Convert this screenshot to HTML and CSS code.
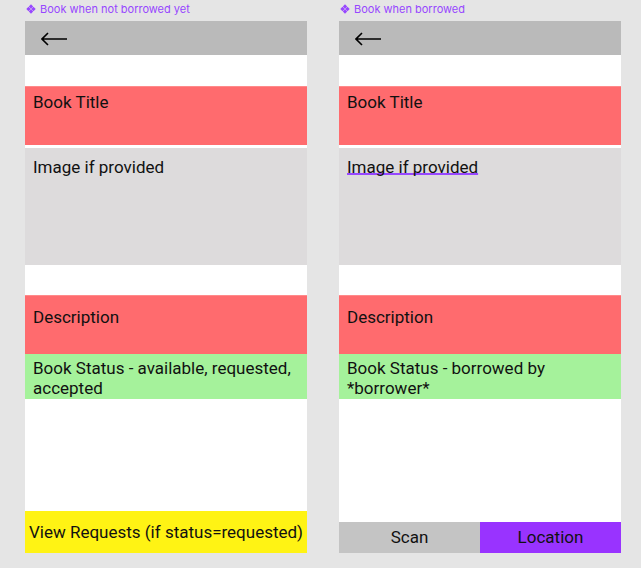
FILE: index.html
```html
<!DOCTYPE html>
<html>
<head>
<meta charset="utf-8">
<link rel="stylesheet" href="styles.css">
</head>
<body>
<div class="page">
  <section class="frame-wrap">
    <div class="label">
      <svg class="comp-icon" viewBox="0 0 10 10" width="10" height="10"><path d="M5 0.3L7.2 2.5L5 4.7L2.8 2.5Z M5 5.3L7.2 7.5L5 9.7L2.8 7.5Z M2.5 2.8L4.7 5L2.5 7.2L0.3 5Z M7.5 2.8L9.7 5L7.5 7.2L5.3 5Z" fill="#9747ff"/></svg>
      <span>Book when not borrowed yet</span>
    </div>
    <div class="frame">
      <div class="header">
        <svg class="back" viewBox="0 0 26 14" width="26" height="14"><path d="M1 7H26 M7 1L1 7L7 13" fill="none" stroke="#000" stroke-width="1.6"/></svg>
      </div>
      <div class="spacer"></div>
      <div class="block red title">Book Title</div>
      <div class="gap"></div>
      <div class="block image">Image if provided</div>
      <div class="spacer2"></div>
      <div class="block red desc">Description</div>
      <div class="block green status">Book Status - available, requested, accepted</div>
      <div class="fill"></div>
      <div class="yellow-btn">View Requests (if status=requested)</div>
    </div>
  </section>
  <section class="frame-wrap">
    <div class="label">
      <svg class="comp-icon" viewBox="0 0 10 10" width="10" height="10"><path d="M5 0.3L7.2 2.5L5 4.7L2.8 2.5Z M5 5.3L7.2 7.5L5 9.7L2.8 7.5Z M2.5 2.8L4.7 5L2.5 7.2L0.3 5Z M7.5 2.8L9.7 5L7.5 7.2L5.3 5Z" fill="#9747ff"/></svg>
      <span>Book when borrowed</span>
    </div>
    <div class="frame">
      <div class="header">
        <svg class="back" viewBox="0 0 26 14" width="26" height="14"><path d="M1 7H26 M7 1L1 7L7 13" fill="none" stroke="#000" stroke-width="1.6"/></svg>
      </div>
      <div class="spacer"></div>
      <div class="block red title">Book Title</div>
      <div class="gap"></div>
      <div class="block image"><span class="squiggle">Image if provided</span></div>
      <div class="spacer2"></div>
      <div class="block red desc">Description</div>
      <div class="block green status">Book Status - borrowed by *borrower*</div>
      <div class="fill"></div>
      <div class="actions">
        <div class="act scan">Scan</div>
        <div class="act loc">Location</div>
      </div>
    </div>
  </section>
</div>
</body>
</html>
```
FILE: styles.css
```css
html, body {
  margin: 0;
  padding: 0;
  background: #e5e5e5;
}
.page {
  width: 641px;
  height: 568px;
  display: flex;
  gap: 32px;
  padding-left: 25px;
  box-sizing: border-box;
  font-family: Roboto, "Liberation Sans", sans-serif;
}
.frame-wrap {
  display: flex;
  flex-direction: column;
  width: 282px;
}
.label {
  height: 21px;
  display: flex;
  align-items: center;
  gap: 4px;
  padding-left: 1px;
  box-sizing: border-box;
  padding-bottom: 3px;
  font-family: Inter, "Liberation Sans", sans-serif;
  font-size: 11px;
  color: #9747ff;
}
.comp-icon { flex: none; }
.frame {
  height: 532px;
  background: #fff;
  display: flex;
  flex-direction: column;
}
.header {
  height: 34px;
  background: #bababa;
  display: flex;
  align-items: center;
  padding-left: 16px;
  padding-top: 1px;
  box-sizing: border-box;
}
.back { display: block; }
.spacer { height: 31px; }
.gap { height: 3px; }
.spacer2 { height: 30px; }
.block {
  font-size: 17px;
  line-height: 20px;
  color: #111;
  padding-left: 8px;
  padding-right: 8px;
  box-sizing: border-box;
}
.red { background: #ff6b6e; }
.green { background: #a5f29b; }
.title { height: 59px; padding-top: 5px; border-top: 1px solid #ff8a8a; }
.image { height: 117px; padding-top: 9px; background: #dddbdc; }
.desc { height: 59px; padding-top: 11px; border-top: 1px solid #ff8a8a; }
.status { height: 45px; padding-top: 4px; }
.fill { flex: 1; }
.squiggle {
  text-decoration: underline;
  text-decoration-color: #9747ff;
  text-decoration-thickness: 2px;
  text-underline-offset: 0px;
  text-decoration-skip-ink: none;
}
.yellow-btn {
  height: 42px;
  background: #fff314;
  display: flex;
  align-items: center;
  justify-content: center;
  font-size: 17px;
  color: #111;
  white-space: nowrap;
}
.actions {
  height: 31px;
  display: flex;
}
.act {
  flex: 1;
  display: flex;
  align-items: center;
  justify-content: center;
  padding-bottom: 2px;
  font-size: 17px;
  color: #111;
}
.scan { background: #c4c4c4; }
.loc { background: #9933ff; }
```
